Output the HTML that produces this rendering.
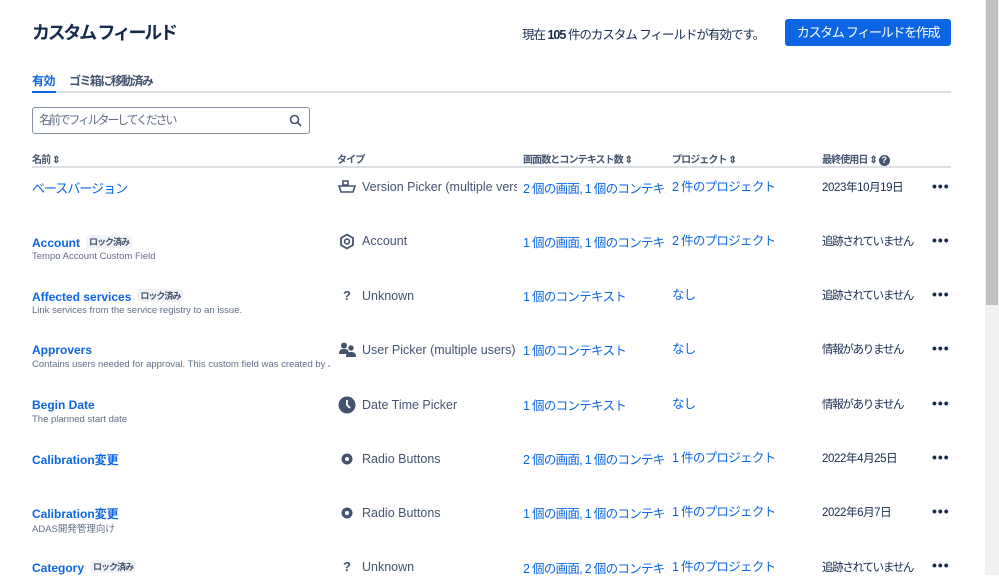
<!DOCTYPE html>
<html><head><meta charset="utf-8"><style>
*{margin:0;padding:0;box-sizing:border-box}
body{width:999px;height:575px;overflow:hidden;background:#fff;font-family:"Liberation Sans","Noto Sans CJK JP",sans-serif;color:#172b4d;position:relative}
.a{position:absolute;white-space:nowrap}
h1{position:absolute;left:32px;top:19px;font-size:18px;font-weight:bold;color:#172b4d;letter-spacing:-2.3px}
.btn{position:absolute;left:785px;top:19px;width:166px;height:27px;background:#0c66e4;color:#fff;font-size:13px;border-radius:3px;text-align:center;line-height:27px;letter-spacing:-1.3px}
.link{color:#0c66e4}
.hd{font-size:10px;color:#44546f;font-weight:bold;top:151px;letter-spacing:-0.9px}
.tag{display:inline-block;background:#f1f2f4;color:#44546f;font-size:9px;padding:0 3px;border-radius:3px;margin-left:6px;vertical-align:2px;letter-spacing:-1px;font-weight:bold}
.nm{font-size:12px;font-weight:bold;color:#0c66e4}
.ds{font-size:9.5px;color:#626f86}
.ty{font-size:12.5px;color:#44546f}
.dots{font-size:14px;font-weight:bold;letter-spacing:1px;color:#172b4d}
.sc{font-size:12.5px;letter-spacing:-0.7px;color:#0c66e4}
.pj{font-size:12.5px;letter-spacing:-0.7px;color:#0c66e4}
.lu{font-size:11.5px;letter-spacing:-1.3px}
.sb{position:absolute;left:985px;top:0;width:14px;height:575px;background:#f1f1f1}
.th{position:absolute;left:986px;top:0;width:12px;height:305px;background:#c1c1c1}
</style></head><body>
<h1>カスタム フィールド</h1>
<div class="a" style="left:522px;top:24px;font-size:12.5px;letter-spacing:-1px">現在 <b>105</b> 件のカスタム フィールドが有効です。</div>
<div class="btn">カスタム フィールドを作成</div>
<div class="a link" style="left:32px;top:72px;font-size:12px;font-weight:bold;letter-spacing:-0.5px">有効</div>
<div class="a" style="left:69px;top:72px;font-size:12px;font-weight:bold;color:#44546f;letter-spacing:-1.6px">ゴミ箱に移動済み</div>
<div class="a" style="left:32px;top:91px;width:919px;height:2px;background:#dcdfe4"></div>
<div class="a" style="left:32px;top:91px;width:24px;height:2px;background:#0c66e4"></div>
<div class="a" style="left:32px;top:107px;width:278px;height:27px;border:1px solid #8590a2;border-radius:3px"></div>
<div class="a" style="left:39px;top:111px;font-size:12px;color:#626f86;letter-spacing:-2.2px">名前でフィルターしてください</div>
<svg class="a" style="left:289px;top:114px" width="13" height="13" viewBox="0 0 13 13"><circle cx="5.5" cy="5.5" r="4" fill="none" stroke="#44546f" stroke-width="1.6"/><path d="M8.5 8.5L12 12" stroke="#44546f" stroke-width="1.6"/></svg>
<div class="a hd" style="left:32px">名前 ⇕</div>
<div class="a hd" style="left:337px">タイプ</div>
<div class="a hd" style="left:523px">画面数とコンテキスト数 ⇕</div>
<div class="a hd" style="left:672px">プロジェクト ⇕</div>
<div class="a hd" style="left:822px">最終使用日 ⇕ <span style="display:inline-block;width:11px;height:11px;border-radius:50%;background:#44546f;color:#fff;text-align:center;line-height:11px;font-size:9px;letter-spacing:0">?</span></div>
<div class="a" style="left:32px;top:166px;width:919px;height:2px;background:#dcdfe4"></div>

<div class="a" style="left:32px;top:178px;font-size:13px;color:#0c66e4;letter-spacing:-1px">ベースバージョン</div>
<svg class="a" style="left:338px;top:180px" width="18" height="14" viewBox="0 0 18 14"><path d="M5 1h5v4H5z M1 6h16l-2 6H3z" fill="none" stroke="#44546f" stroke-width="1.6"/></svg>
<div class="a ty" style="left:362px;top:180px;width:155px;overflow:hidden">Version Picker (multiple versions)</div>
<div class="a sc" style="left:523px;top:178px;width:143px;overflow:hidden">2 個の画面, 1 個のコンテキスト</div>
<div class="a pj" style="left:672px;top:176px">2 件のプロジェクト</div>
<div class="a lu" style="left:822px;top:179px;letter-spacing:-0.4px">2023年10月19日</div>
<div class="a dots" style="left:932px;top:178px">•••</div>

<div class="a nm" style="left:32px;top:235px">Account<span class="tag">ロック済み</span></div>
<div class="a ds" style="left:32px;top:251px">Tempo Account Custom Field</div>
<svg class="a" style="left:339px;top:233px" width="16" height="17" viewBox="0 0 16 17"><path d="M8 1.5l6 3.5v7l-6 3.5-6-3.5v-7z" fill="none" stroke="#44546f" stroke-width="1.8"/><circle cx="8" cy="8.5" r="2.4" fill="none" stroke="#44546f" stroke-width="1.6"/></svg>
<div class="a ty" style="left:362px;top:234px">Account</div>
<div class="a sc" style="left:523px;top:232px;width:143px;overflow:hidden">1 個の画面, 1 個のコンテキスト</div>
<div class="a pj" style="left:672px;top:230px">2 件のプロジェクト</div>
<div class="a lu" style="left:822px;top:233px">追跡されていません</div>
<div class="a dots" style="left:932px;top:232px">•••</div>

<div class="a nm" style="left:32px;top:289px">Affected services<span class="tag">ロック済み</span></div>
<div class="a ds" style="left:32px;top:305px">Link services from the service registry to an issue.</div>
<div class="a" style="left:343px;top:288px;font-size:13px;font-weight:bold;color:#44546f">?</div>
<div class="a ty" style="left:362px;top:289px">Unknown</div>
<div class="a sc" style="left:523px;top:286px">1 個のコンテキスト</div>
<div class="a pj" style="left:672px;top:284px">なし</div>
<div class="a lu" style="left:822px;top:287px">追跡されていません</div>
<div class="a dots" style="left:932px;top:286px">•••</div>

<div class="a nm" style="left:32px;top:343px">Approvers</div>
<div class="a ds" style="left:32px;top:359px;width:298px;overflow:hidden">Contains users needed for approval. This custom field was created by Jira Service Management.</div>
<svg class="a" style="left:339px;top:342px" width="17" height="15" viewBox="0 0 17 15"><circle cx="5" cy="3.5" r="3" fill="#44546f"/><path d="M0 12c0-4 2-5 5-5s5 1 5 5z" fill="#44546f"/><circle cx="12" cy="6" r="2.7" fill="#44546f"/><path d="M7 15c0-4 2-5 5-5s5 1 5 5z" fill="#44546f"/></svg>
<div class="a ty" style="left:362px;top:343px">User Picker (multiple users)</div>
<div class="a sc" style="left:523px;top:340px">1 個のコンテキスト</div>
<div class="a pj" style="left:672px;top:338px">なし</div>
<div class="a lu" style="left:822px;top:341px">情報がありません</div>
<div class="a dots" style="left:932px;top:340px">•••</div>

<div class="a nm" style="left:32px;top:398px">Begin Date</div>
<div class="a ds" style="left:32px;top:414px">The planned start date</div>
<svg class="a" style="left:338px;top:396px" width="18" height="18" viewBox="0 0 18 18"><circle cx="9" cy="9" r="8.5" fill="#44546f"/><path d="M9 4v5l3 3" fill="none" stroke="#fff" stroke-width="1.8"/></svg>
<div class="a ty" style="left:362px;top:398px">Date Time Picker</div>
<div class="a sc" style="left:523px;top:395px">1 個のコンテキスト</div>
<div class="a pj" style="left:672px;top:393px">なし</div>
<div class="a lu" style="left:822px;top:396px">情報がありません</div>
<div class="a dots" style="left:932px;top:395px">•••</div>

<div class="a nm" style="left:32px;top:451px">Calibration変更</div>
<svg class="a" style="left:341px;top:453px" width="12" height="12" viewBox="0 0 12 12"><circle cx="6" cy="6" r="5.5" fill="#44546f"/><circle cx="6" cy="6" r="2" fill="#fff"/></svg>
<div class="a ty" style="left:362px;top:452px">Radio Buttons</div>
<div class="a sc" style="left:523px;top:449px;width:143px;overflow:hidden">2 個の画面, 1 個のコンテキスト</div>
<div class="a pj" style="left:672px;top:447px">1 件のプロジェクト</div>
<div class="a lu" style="left:822px;top:450px;letter-spacing:-0.4px">2022年4月25日</div>
<div class="a dots" style="left:932px;top:449px">•••</div>

<div class="a nm" style="left:32px;top:505px">Calibration変更</div>
<div class="a ds" style="left:32px;top:521px">ADAS開発管理向け</div>
<svg class="a" style="left:341px;top:507px" width="12" height="12" viewBox="0 0 12 12"><circle cx="6" cy="6" r="5.5" fill="#44546f"/><circle cx="6" cy="6" r="2" fill="#fff"/></svg>
<div class="a ty" style="left:362px;top:506px">Radio Buttons</div>
<div class="a sc" style="left:523px;top:503px;width:143px;overflow:hidden">1 個の画面, 1 個のコンテキスト</div>
<div class="a pj" style="left:672px;top:501px">1 件のプロジェクト</div>
<div class="a lu" style="left:822px;top:504px;letter-spacing:-0.4px">2022年6月7日</div>
<div class="a dots" style="left:932px;top:503px">•••</div>

<div class="a nm" style="left:32px;top:560px">Category<span class="tag">ロック済み</span></div>
<div class="a" style="left:343px;top:559px;font-size:13px;font-weight:bold;color:#44546f">?</div>
<div class="a ty" style="left:362px;top:560px">Unknown</div>
<div class="a sc" style="left:523px;top:558px;width:143px;overflow:hidden">2 個の画面, 2 個のコンテキスト</div>
<div class="a pj" style="left:672px;top:556px">1 件のプロジェクト</div>
<div class="a lu" style="left:822px;top:559px">追跡されていません</div>
<div class="a dots" style="left:932px;top:557px">•••</div>

<div class="sb"></div><div class="th"></div>
</body></html>
